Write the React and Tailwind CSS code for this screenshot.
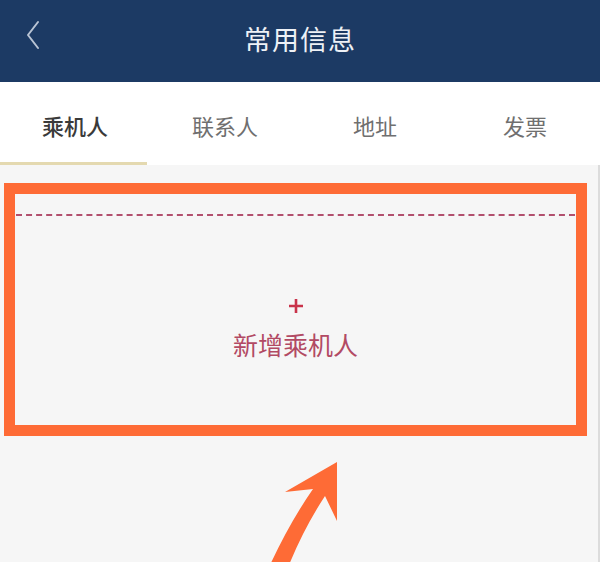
import React from "react";

export default function App() {
  const tabs = ["乘机人", "联系人", "地址", "发票"];
  return (
    <div
      className="relative w-[600px] h-[562px] overflow-hidden bg-[#f6f6f6]"
      style={{ fontFamily: '"Noto Sans CJK SC", "Noto Sans", sans-serif' }}
    >
      <header className="relative h-[82px] bg-[#1c3a64] flex items-center justify-center">
        <svg className="absolute left-[22px] top-[18px]" width="24" height="36" viewBox="0 0 24 36">
          <path d="M16 4 L6 17 L16 30" fill="none" stroke="#b9c4d4" strokeWidth="2" strokeLinecap="round" strokeLinejoin="round" />
        </svg>
        <h1 className="text-[27px] leading-none text-[#eef1f6] tracking-[1px] -mt-[6px]">常用信息</h1>
      </header>

      <nav className="h-[83px] bg-white grid grid-cols-4">
        {tabs.map((t, i) => (
          <div key={t} className="relative flex items-center justify-center pt-[4px]">
            <span
              className={
                i === 0
                  ? "text-[22px] text-[#3a3a3a] font-medium"
                  : "text-[22px] text-[#6f6f6f]"
              }
            >
              {t}
            </span>
            {i === 0 && (
              <div className="absolute left-0 bottom-0 h-[3px] w-[147px] bg-[#e4d9b0]" />
            )}
          </div>
        ))}
      </nav>

      <main className="pt-[18px] pl-[4px] border-r-2 border-[#dcdcdc] h-[397px]">
        <div className="w-[583px] h-[253px] border-[11px] border-[#fe6b36] bg-[#f6f6f6] flex flex-col">
          <div className="mt-[20px] mx-[1px] border-t-2 border-dashed border-[#b2506e]" />
          <div className="flex-1 flex flex-col items-center pt-[83px]">
            <svg width="14" height="14" viewBox="0 0 14 14">
              <path d="M7 0 V14 M0 7 H14" stroke="#c9334a" strokeWidth="2.6" />
            </svg>
            <span className="mt-[19px] text-[25px] leading-none text-[#b24a64]">新增乘机人</span>
          </div>
        </div>
      </main>

      <svg className="absolute left-0 top-0 pointer-events-none" width="600" height="562" viewBox="0 0 600 562">
        <path
          d="M270 565 Q 290 522 313 489 L 285 492 L 337 462 L 337 521 L 325 496 Q 304 528 289 565 Z"
          fill="#fe6b36"
        />
      </svg>
    </div>
  );
}
